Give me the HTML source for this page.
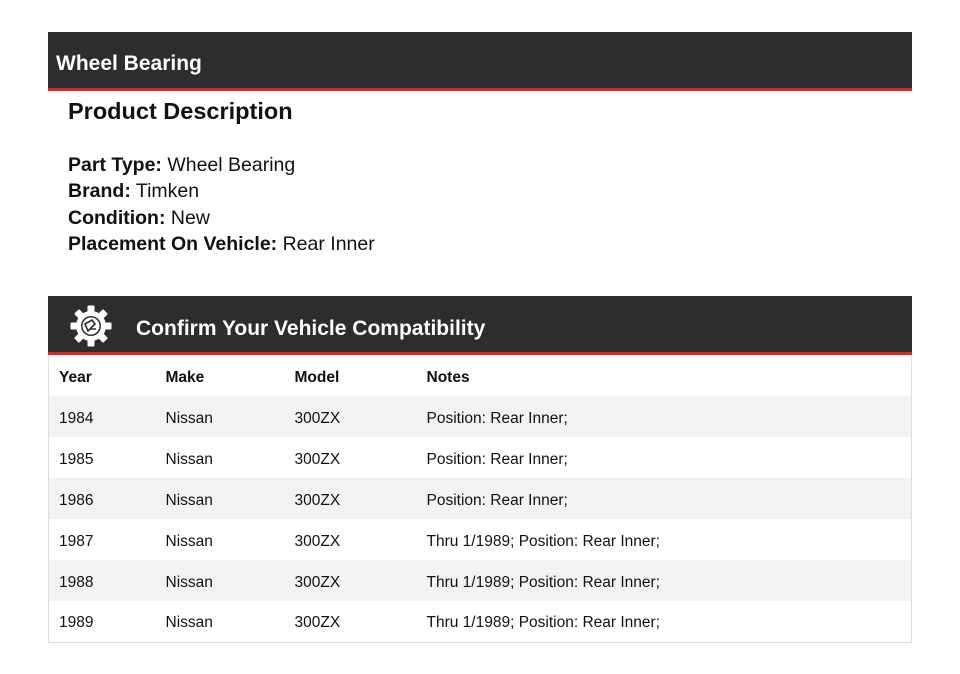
<!DOCTYPE html>
<html><head><meta charset="utf-8"><style>
*{margin:0;padding:0;box-sizing:border-box}
body{width:960px;height:674px;background:#fff;font-family:"Liberation Sans",sans-serif;color:#111;position:relative;overflow:hidden}
.bar{position:absolute;left:48px;width:864px;background:#2e2d2d;border-bottom:3px solid #d8232a;color:#fff;font-family:"Liberation Sans",sans-serif;font-weight:bold}
.b1{top:32px;height:59px;font-size:21px;padding:20px 0 0 8px}
.b2{top:296px;height:59px;font-size:21px}
h2{position:absolute;left:68px;top:98px;font-size:23.5px;font-weight:bold}
.desc{position:absolute;left:68px;top:152px;font-size:19.5px;line-height:26.3px}
.desc b{font-weight:bold}
table{position:absolute;left:48px;top:355px;width:864px;border-collapse:collapse;border:1px solid #ddd;border-top:none;font-size:15.5px}
td,th{height:41px;text-align:left;padding-left:10px;padding-top:4px}
th{font-weight:bold;font-size:15.5px}
tr:nth-child(even){background:#f2f2f2}
</style></head><body>
<div class="bar b1">Wheel Bearing</div>
<h2>Product Description</h2>
<div class="desc"><b>Part Type:</b> Wheel Bearing<br><b>Brand:</b> Timken<br><b>Condition:</b> New<br><b>Placement On Vehicle:</b> Rear Inner</div>
<div class="bar b2">
<svg style="position:absolute;left:22px;top:9px" width="42" height="42" viewBox="0 0 42 42">
<g fill="#fff" transform="translate(21 21)">
<circle r="15"/>
<g id="t"><rect x="-3.5" y="-20.5" width="7" height="8" rx="1"/></g>
<use href="#t" transform="rotate(45)"/><use href="#t" transform="rotate(90)"/><use href="#t" transform="rotate(135)"/><use href="#t" transform="rotate(180)"/><use href="#t" transform="rotate(225)"/><use href="#t" transform="rotate(270)"/><use href="#t" transform="rotate(315)"/>
</g>
<circle cx="21" cy="21" r="10" fill="#2e2d2d"/>
<circle cx="21" cy="21" r="8.5" fill="#fff"/>
<path d="M15 19 L22 15 L25 19 L18 26 Z M20 24 L26 24" stroke="#2e2d2d" stroke-width="1.6" fill="none"/>
</svg>
<span style="position:absolute;left:88px;top:21px">Confirm Your Vehicle Compatibility</span></div>
<table>
<tr><th style="width:107px">Year</th><th style="width:129px">Make</th><th style="width:132px">Model</th><th>Notes</th></tr>
<tr><td>1984</td><td>Nissan</td><td>300ZX</td><td>Position: Rear Inner;</td></tr>
<tr><td>1985</td><td>Nissan</td><td>300ZX</td><td>Position: Rear Inner;</td></tr>
<tr><td>1986</td><td>Nissan</td><td>300ZX</td><td>Position: Rear Inner;</td></tr>
<tr><td>1987</td><td>Nissan</td><td>300ZX</td><td>Thru 1/1989; Position: Rear Inner;</td></tr>
<tr><td>1988</td><td>Nissan</td><td>300ZX</td><td>Thru 1/1989; Position: Rear Inner;</td></tr>
<tr><td>1989</td><td>Nissan</td><td>300ZX</td><td>Thru 1/1989; Position: Rear Inner;</td></tr>
</table>
</body></html>
